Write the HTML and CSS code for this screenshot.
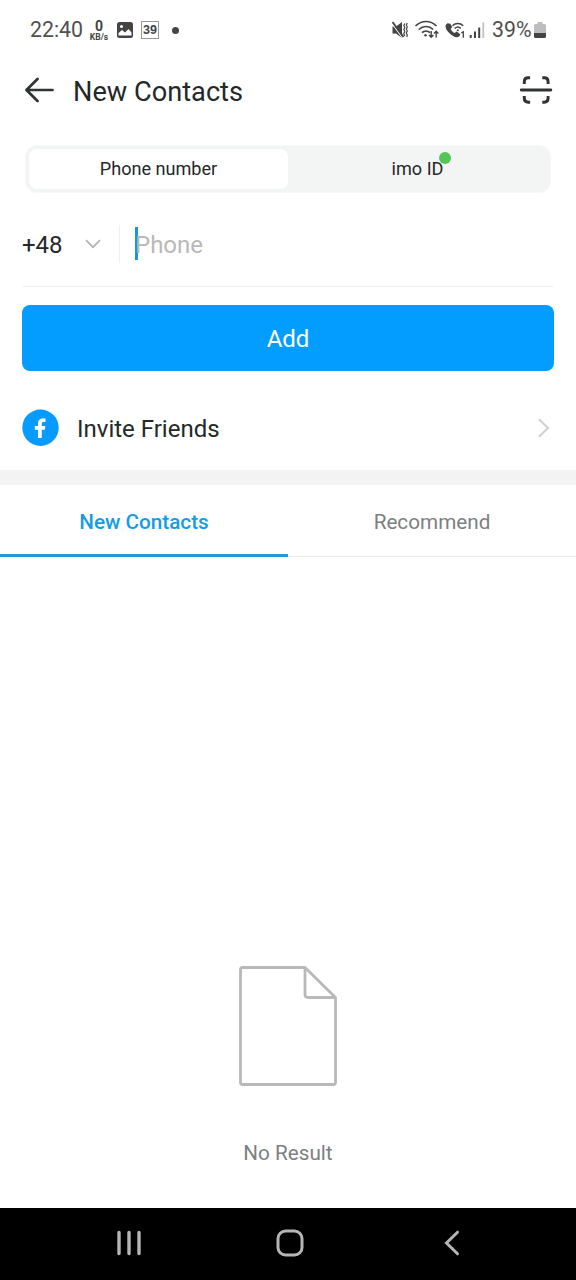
FILE: index.html
```html
<!DOCTYPE html>
<html lang="en">
<head>
<meta charset="utf-8">
<title>New Contacts</title>
<link rel="stylesheet" href="styles.css">
</head>
<body>
<div class="screen">
  <div class="status">
    <span class="clock">22:40</span>
    <span class="speed"><b>0</b><small>KB/s</small></span>
    <svg class="picture" width="16" height="16" viewBox="0 0 16 16"><rect width="16" height="16" rx="2.5" fill="#444"/><path d="M1.500 13.500v-2.500l3.500-3 3 2.500 3.500-3.500 3 3.500v3z" fill="#fff"/><circle cx="4.500" cy="4.500" r="1.500" fill="#fff"/></svg>
    <span class="count">39</span>
    <span class="dot"></span>
    <svg class="signals" width="94" height="22" viewBox="391 19 94 22" fill="none" stroke="#444" stroke-width="1.700">
      <path d="M392.500 26.500h3.500l6-4.500v16l-6-4.500h-3.500z" fill="#444" stroke="none"/>
      <path d="M392 23.500l10.500 14.500" stroke="#fff" stroke-width="1.200"/><path d="M392.500 22l11 15" stroke-width="1.900"/>
      <path d="M404.800 23.500l-1 2 1 2-1 2 1 2-1 2 1 2.500M407.300 23l-1 2 1 2-1 2 1 2-1 2 1 2-.5 2" stroke-width="1.200"/>
      <path d="M415.500 26c6-6 15-6 21 0M418.800 29.500c4.200-4 10.200-4 14.400 0M422 32.700c2.300-2.200 5.700-2.200 8 0"/>
      <circle cx="425.500" cy="35.200" r="1.200" fill="#444" stroke="none"/>
      <path d="M431.200 31v6M429 35l2.200 2.200 2.200-2.200M436.200 37.500v-6M434 33.500l2.200-2.200 2.200 2.200" stroke-width="1.400"/>
      <path d="M447.500 23.300c-2.800 1.600-2.600 5 1 9s8 6.300 10.800 4.200l1-2.300-3.600-2.700-2.200 1.500c-1.900-1-3-2.300-3.800-4l1.600-2-2-3.300z" fill="#444" stroke="none"/>
      <path d="M452.500 25.700c3-3 7.700-3 10.700 0M454.800 28.400c1.800-1.700 4.300-1.700 6 0" stroke-width="1.500"/><circle cx="457.800" cy="30.300" r="1" fill="#444" stroke="none"/>
      <path d="M461.300 32.800l2-1v6" stroke-width="1.300"/>
      <path d="M470.700 35v3M475 31.500v6.500M479.200 27.500v10.500" stroke-width="2"/><path d="M483.300 22.500v15.500" stroke="#c2c2c2" stroke-width="1.800"/>
    </svg>
    <span class="percent">39%</span>
    <svg class="battery" width="12" height="17" viewBox="0 0 12 17"><path d="M3.500 0h5v2h2q1.500 0 1.500 1.500v9H0v-9Q0 2 1.500 2h2z" fill="#bdbdbd"/><path d="M0 11h12v3.500q0 1.500-1.500 1.500h-9Q0 16 0 14.500z" fill="#444"/></svg>
  </div>

  <header class="header">
    <svg width="30" height="26" viewBox="0 0 30 26" fill="none" stroke="#303333" stroke-width="2.700" stroke-linecap="round" stroke-linejoin="round"><path d="M27.500 13H2M12.500 2L1.500 13l11 11"/></svg>
    <h1>New Contacts</h1>
    <svg class="scan" width="34" height="30" viewBox="0 0 34 30" fill="none" stroke="#303333" stroke-width="2.900" stroke-linecap="round"><path d="M2.300 15h29.500" /><path d="M5.300 9V6.700q0-3.900 3.900-3.900h1.900M23.300 2.800h1.900q3.900 0 3.900 3.900V9M5.300 21v2.300q0 3.900 3.900 3.900h1.900M23.300 27.200h1.900q3.900 0 3.900-3.900V21" stroke-linecap="butt"/></svg>
  </header>

  <div class="segments">
    <div class="segment active">Phone number</div>
    <div class="segment"><span class="label">imo ID<i class="badge"></i></span></div>
  </div>

  <div class="phone">
    <span class="code">+48</span>
    <svg width="16" height="10" viewBox="0 0 16 10" fill="none" stroke="#b3b5b5" stroke-width="1.800"><path d="M1 1.200l7 7 7-7"/></svg>
    <span class="divider"></span>
    <span class="caret"></span>
    <span class="placeholder">Phone</span>
  </div>

  <div class="add">Add</div>

  <div class="invite">
    <svg width="37" height="37" viewBox="0 0 37 37"><circle cx="18.500" cy="18.700" r="18.200" fill="#079bff"/><path d="M16 29v-8.200h-3.200v-3.800H16v-2.200c0-3.700 1.800-5.300 4.800-5.300h2.700v3.500h-1.800c-1.400 0-1.900.6-1.900 1.900V17h3.600l-.6 3.800h-3V29z" fill="#fff"/></svg>
    <span class="friends">Invite Friends</span>
    <svg class="chevron" width="12" height="20" viewBox="0 0 12 20" fill="none" stroke="#cfcfcf" stroke-width="2"><path d="M1 1.200l9 8.800-9 8.800"/></svg>
  </div>

  <div class="band"></div>
  <div class="tabs">
    <div class="tab current">New Contacts</div>
    <div class="tab">Recommend</div>
  </div>

  <main class="empty">
    <svg width="98" height="120" viewBox="0 0 98 120" fill="none" stroke="#b9b9b9" stroke-width="2.800" stroke-linejoin="round"><path d="M66 1.500H3.500q-2 0-2 2v113q0 2 2 2h91q2 0 2-2V31.500zM66 1.500V28.500q0 3 3 3h27.500"/></svg>
    <p>No Result</p>
  </main>

  <nav class="nav">
    <svg width="26" height="26" viewBox="0 0 26 26" stroke="#b5b5b5" stroke-width="3.400" stroke-linecap="round"><path d="M3 2.500v21M13 2.500v21M23 2.500v21"/></svg>
    <svg class="home" width="28" height="28" viewBox="0 0 28 28" fill="none" stroke="#b5b5b5" stroke-width="3"><rect x="2" y="2" width="24" height="24" rx="7.500"/></svg>
    <svg width="16" height="26" viewBox="0 0 16 26" fill="none" stroke="#b5b5b5" stroke-width="3" stroke-linecap="round"><path d="M13.500 2.200L2.500 13l11 10.800"/></svg>
  </nav>
</div>
</body>
</html>
```
FILE: styles.css
```css
* { box-sizing: border-box; }
body { margin: 0; background: #fff; font-family: Roboto, "Liberation Sans", sans-serif; color: #242829; }
svg { display: block; flex: none; }
.screen { width: 576px; height: 1280px; display: flex; flex-direction: column; overflow: hidden; }
.status { height: 60px; padding: 0 30px; display: flex; align-items: center; color: #505050; font-size: 21.3px; line-height: 60px; white-space: nowrap; flex: none; }
.clock { width: 59px; }
.speed { width: 20px; display: flex; flex-direction: column; align-items: center; color: #444; line-height: 1; }
.speed b { font-size: 14px; line-height: 13px; }
.speed small { font-size: 8.5px; line-height: 8px; font-weight: 700; }
.picture { margin-left: 8px; }
.count { margin-left: 8px; width: 18px; height: 18px; border: 1px solid #999; font: 700 12.5px/16px "Liberation Sans", sans-serif; text-align: center; color: #444; }
.dot { margin-left: 13px; width: 7px; height: 7px; border-radius: 50%; background: #444; }
.signals { margin-left: auto; }
.percent { margin-left: 7px; width: 42px; }
.battery { margin-top: 1px; }
.header { height: 85px; padding: 17px 24px 0 25px; display: flex; align-items: flex-start; flex: none; }
.header h1 { margin: -1px 0 0 18px; font-size: 27.2px; line-height: 32px; font-weight: 400; }
.header .scan { margin: -2px -1px 0 auto; }
.segments { margin: 0 25px; height: 48px; padding: 3px; display: flex; background: #f3f5f4; border: 1px solid #f7f8f8; border-radius: 12px; flex: none; }
.segment { flex: 1; display: flex; align-items: center; justify-content: center; padding-bottom: 1px; font-size: 18.1px; border-radius: 8px; }
.active { background: #fff; }
.label { position: relative; }
.badge { position: absolute; right: -8px; top: -6px; width: 12px; height: 12px; border-radius: 50%; background: #55c556; }
.phone { margin: 0 22px; height: 94px; padding-top: 8px; display: flex; align-items: center; border-bottom: 1px solid #f0f0f0; font-size: 24px; flex: none; }
.code { width: 63px; padding-top: 2px; }
.divider { margin-left: 18px; width: 1px; height: 38px; background: #f0f0f0; }
.caret { margin-left: 15px; width: 3px; height: 33px; background: #1495e6; }
.placeholder { margin-left: -3px; padding-top: 2px; color: #b8b8b8; }
.add { margin: 18px 22px 0; height: 66px; padding-top: 1px; border-radius: 8px; background: #039cff; color: #fff; display: flex; align-items: center; justify-content: center; font-size: 24px; flex: none; }
.invite { height: 99px; padding: 14px 26px 0 22px; display: flex; align-items: center; font-size: 24px; flex: none; }
.friends { margin-left: 18px; padding-top: 2px; }
.chevron { margin-left: auto; }
.band { height: 15px; background: #f3f3f3; flex: none; }
.tabs { height: 72px; display: flex; flex: none; }
.tab { flex: 1; border-bottom: 1px solid #e9e9e9; text-align: center; font-size: 20.700px; line-height: 75px; color: #7c8082; }
.current { border-bottom: 3px solid #2b94df; color: #149be9; font-weight: 500; }
.empty { flex: 1; display: flex; flex-direction: column; align-items: center; padding-top: 409px; }
.empty p { margin: 52px 0 0; font-size: 20.700px; line-height: 30px; color: #7c8082; }
.nav { height: 72px; padding: 0 116px 2px; background: #000; display: flex; align-items: center; justify-content: space-between; flex: none; }
.home { margin-right: 6px; }
```
